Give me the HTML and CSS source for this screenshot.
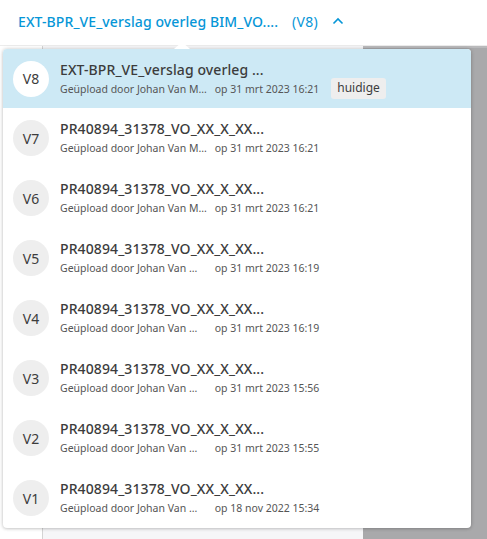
FILE: index.html
```html
<!DOCTYPE html>
<html>
<head>
<meta charset="utf-8">
<link rel="stylesheet" href="styles.css">
</head>
<body>
<div class="page">
  <header class="topbar">
    <div class="doc-title">
      <span class="doc-name">EXT-BPR_VE_verslag overleg BIM_VO....</span>
      <span class="doc-ver">(V8)</span>
      <svg class="chev" width="12" height="8" viewBox="0 0 12 8"><path d="M1.5 6.5 L6 2 L10.5 6.5" fill="none" stroke="#0696d7" stroke-width="1.6"/></svg>
    </div>
  </header>
  <div class="workspace">
    <div class="rail"></div>
    <div class="center"></div>
    <div class="viewer"></div>
  </div>

  <div class="menu">
    <div class="caret"></div>
    <ul class="versions">
      <li class="ver current">
        <div class="badge-v">V8</div>
        <div class="info">
          <div class="name">EXT-BPR_VE_verslag overleg ...</div>
          <div class="meta"><span class="who">Geüpload door Johan Van M...</span> op 31 mrt 2023 16:21</div>
        </div>
        <span class="tag">huidige</span>
      </li>
      <li class="ver">
        <div class="badge-v">V7</div>
        <div class="info">
          <div class="name">PR40894_31378_VO_XX_X_XX...</div>
          <div class="meta"><span class="who">Geüpload door Johan Van M...</span> op 31 mrt 2023 16:21</div>
        </div>
      </li>
      <li class="ver">
        <div class="badge-v">V6</div>
        <div class="info">
          <div class="name">PR40894_31378_VO_XX_X_XX...</div>
          <div class="meta"><span class="who">Geüpload door Johan Van M...</span> op 31 mrt 2023 16:21</div>
        </div>
      </li>
      <li class="ver">
        <div class="badge-v">V5</div>
        <div class="info">
          <div class="name">PR40894_31378_VO_XX_X_XX...</div>
          <div class="meta"><span class="who short">Geüpload door Johan Van ...</span> op 31 mrt 2023 16:19</div>
        </div>
      </li>
      <li class="ver">
        <div class="badge-v">V4</div>
        <div class="info">
          <div class="name">PR40894_31378_VO_XX_X_XX...</div>
          <div class="meta"><span class="who short">Geüpload door Johan Van ...</span> op 31 mrt 2023 16:19</div>
        </div>
      </li>
      <li class="ver">
        <div class="badge-v">V3</div>
        <div class="info">
          <div class="name">PR40894_31378_VO_XX_X_XX...</div>
          <div class="meta"><span class="who short">Geüpload door Johan Van ...</span> op 31 mrt 2023 15:56</div>
        </div>
      </li>
      <li class="ver">
        <div class="badge-v">V2</div>
        <div class="info">
          <div class="name">PR40894_31378_VO_XX_X_XX...</div>
          <div class="meta"><span class="who short">Geüpload door Johan Van ...</span> op 31 mrt 2023 15:55</div>
        </div>
      </li>
      <li class="ver">
        <div class="badge-v">V1</div>
        <div class="info">
          <div class="name">PR40894_31378_VO_XX_X_XX...</div>
          <div class="meta"><span class="who short">Geüpload door Johan Van ...</span> op 18 nov 2022 15:34</div>
        </div>
      </li>
    </ul>
  </div>
</div>
</body>
</html>
```

FILE: styles.css
```css
* { box-sizing: border-box; }
html, body { margin: 0; padding: 0; }
body {
  font-family: "Noto Sans", "Open Sans", sans-serif;
  background: #ffffff;
  width: 487px;
  height: 539px;
  overflow: hidden;
}
.page {
  position: relative;
  width: 487px;
  height: 539px;
  display: flex;
  flex-direction: column;
}
.topbar {
  height: 46px;
  background: #fff;
  border-bottom: 1px solid #ececec;
  padding: 10px 0 0 18px;
}
.doc-title {
  display: flex;
  align-items: center;
  color: #0696d7;
  font-size: 14px;
  height: 22px;
}
.doc-name { font-weight: 500; letter-spacing: 0.1px; }
.doc-ver { margin-left: 14px; letter-spacing: 0.3px; }
.chev { margin-left: 14px; }
.workspace {
  flex: 1;
  display: flex;
}
.rail {
  width: 43px;
  border-right: 1px solid #d4d4d4;
  background: #fff;
}
.center {
  width: 320px;
  background: #f6f6f8;
}
.viewer {
  flex: 1;
  background: #a9a9ab;
  border-top: 2px solid #b9b9bb;
}
.menu {
  position: absolute;
  left: 3px;
  top: 49px;
  width: 468px;
  height: 479px;
  background: #fff;
  border-radius: 4px;
  box-shadow: 0 0 4px rgba(0,0,0,0.18), 0 1px 3px rgba(0,0,0,0.12);
}
.caret {
  position: absolute;
  left: 171px;
  top: -7px;
  width: 0;
  height: 0;
  border-left: 8px solid transparent;
  border-right: 8px solid transparent;
  border-bottom: 7px solid #fff;
}
.versions {
  list-style: none;
  margin: 0;
  padding: 0;
  border-radius: 4px;
  overflow: hidden;
}
.ver {
  height: 60px;
  display: flex;
  align-items: center;
  padding-left: 10px;
}
.ver.current {
  background: #cde9f5;
  height: 59px;
}
.badge-v {
  width: 36px;
  height: 36px;
  border-radius: 50%;
  background: #eeeeee;
  color: #3c3c3c;
  font-size: 14px;
  display: flex;
  align-items: center;
  justify-content: center;
  flex-shrink: 0;
}
.current .badge-v { background: #fff; }
.info {
  margin-left: 11px;
  display: flex;
  flex-direction: column;
}
.name {
  font-size: 14px;
  font-weight: 500;
  color: #3c3c3c;
  line-height: 18px;
  margin-top: -1px;
  letter-spacing: 0.1px;
}
.meta {
  font-size: 10.5px;
  color: #555;
  line-height: 14px;
  margin-top: 3px;
  white-space: nowrap;
}
.who { display: inline-block; width: 152px; }
.tag {
  margin-left: 12px;
  margin-top: 20px;
  background: #eeeeee;
  color: #3c3c3c;
  font-size: 12px;
  border-radius: 3px;
  padding: 1px 6px 2px;
  line-height: 18px;
}
```
